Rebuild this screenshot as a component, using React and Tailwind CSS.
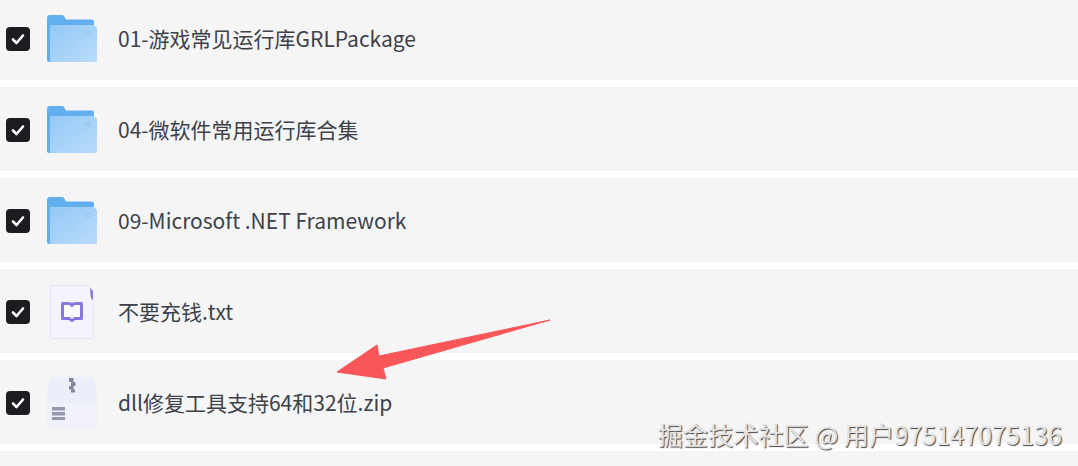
const files = [
  { name: "01-游戏常见运行库GRLPackage", type: "folder" },
  { name: "04-微软件常用运行库合集", type: "folder" },
  { name: "09-Microsoft .NET Framework", type: "folder" },
  { name: "不要充钱.txt", type: "txt" },
  { name: "dll修复工具支持64和32位.zip", type: "zip" },
  { name: "", type: "" },
];

function FolderIcon() {
  return (
    <svg width="50" height="48" viewBox="0 0 50 48" className="shrink-0">
      <defs>
        <linearGradient id="folderFront" x1="0" y1="0" x2="1" y2="1">
          <stop offset="0" stopColor="#94c9f6" />
          <stop offset="1" stopColor="#b9dbfa" />
        </linearGradient>
      </defs>
      <path d="M0 3Q0 0 3 0H15Q16 0 17 1L19 4.500H45Q47 4.500 47 7V10H47V47H2Q0 47 0 45Z" fill="#62aff0" />
      <path d="M3 10H47L50 13V45Q50 47 48 47H3Z" fill="url(#folderFront)" />
      <path d="M37 17H44M39 20H44" stroke="#8fc0ea" strokeWidth="1" />
    </svg>
  );
}

function TxtIcon() {
  return (
    <svg width="44" height="54" viewBox="0 0 44 54" className="shrink-0">
      <path d="M.5 2Q.5 .5 2 .5H38.500L43 5V51Q43 53.500 40.500 53.500H3Q.5 53.500 .5 51Z" fill="#f4f3fe" stroke="#e4e2f7" strokeWidth="1" />
      <path d="M40 3L43 6V15Q41 14 40.500 11Z" fill="#8b7ee0" />
      <path d="M12.500 18.500H19Q21 18.500 22 20.500Q23 18.500 25 18.500H31.500V33.500H25L22 35.500L19 33.500H12.500Z" fill="#fbfbff" stroke="#8578e0" strokeWidth="3" strokeLinejoin="round" />
    </svg>
  );
}

function ZipIcon() {
  return (
    <svg width="50" height="52" viewBox="0 0 50 52" className="shrink-0">
      <path d="M5 0H45L50 11V50H0V11Z" fill="#eceefa" />
      <path d="M1 26H49V49H1Z" fill="#f0f1fb" />
      <path d="M22 1H26.500V5H22ZM24 5H28.500V9H24ZM22 9H26.500V12.500H22ZM24 12.500H28V15.500H24Z" fill="#85889c" />
      <path d="M5 30H18V33.500H5ZM5 35H18V38.500H5ZM5 40H18V43H5Z" fill="#9599ae" />
    </svg>
  );
}

function CheckBox() {
  return (
    <div className="w-6 h-6 shrink-0 rounded-[4px] bg-[#1c1d21] flex items-center justify-center">
      <svg width="14" height="12" viewBox="0 0 14 12">
        <path d="M2 6.500L5.500 10L12 2.500" fill="none" stroke="#fff" strokeWidth="2.600" strokeLinecap="round" strokeLinejoin="round" />
      </svg>
    </div>
  );
}

function Row({ file }) {
  return (
    <div className="h-[84px] shrink-0 bg-[#f5f5f6] flex items-center pl-[6px] pt-[2px]">
      {file.type && <CheckBox />}
      {file.type && (
        <div className="w-[56px] ml-[14px] flex justify-center">
          {file.type === "folder" && <FolderIcon />}
          {file.type === "txt" && <TxtIcon />}
          {file.type === "zip" && <ZipIcon />}
        </div>
      )}
      <span className="ml-[18px] text-[21px] text-[#3d4149] font-['Noto_Sans_CJK_SC',sans-serif]">
        {file.name}
      </span>
    </div>
  );
}

export default function App() {
  return (
    <div className="relative w-[1078px] h-[466px] overflow-hidden bg-white">
      <div className="flex flex-col gap-[7px] -mt-[4px]">
        {files.map((f, i) => (
          <Row key={i} file={f} />
        ))}
      </div>
      <svg width="1078" height="466" className="absolute left-0 top-0 pointer-events-none">
        <path d="M550 320L379 356L377 345L337 372L386 379L383 368Z" fill="#f9565a" stroke="#f9565a" strokeWidth="1" strokeLinejoin="round" />
      </svg>
      <div className="absolute right-[16px] top-[418px] text-[25.2px] leading-[32px] text-[#e4e4e4] [text-shadow:1px_1px_1px_#444] font-['Noto_Sans_CJK_SC',sans-serif]">
        掘金技术社区 @ 用户975147075136
      </div>
    </div>
  );
}
